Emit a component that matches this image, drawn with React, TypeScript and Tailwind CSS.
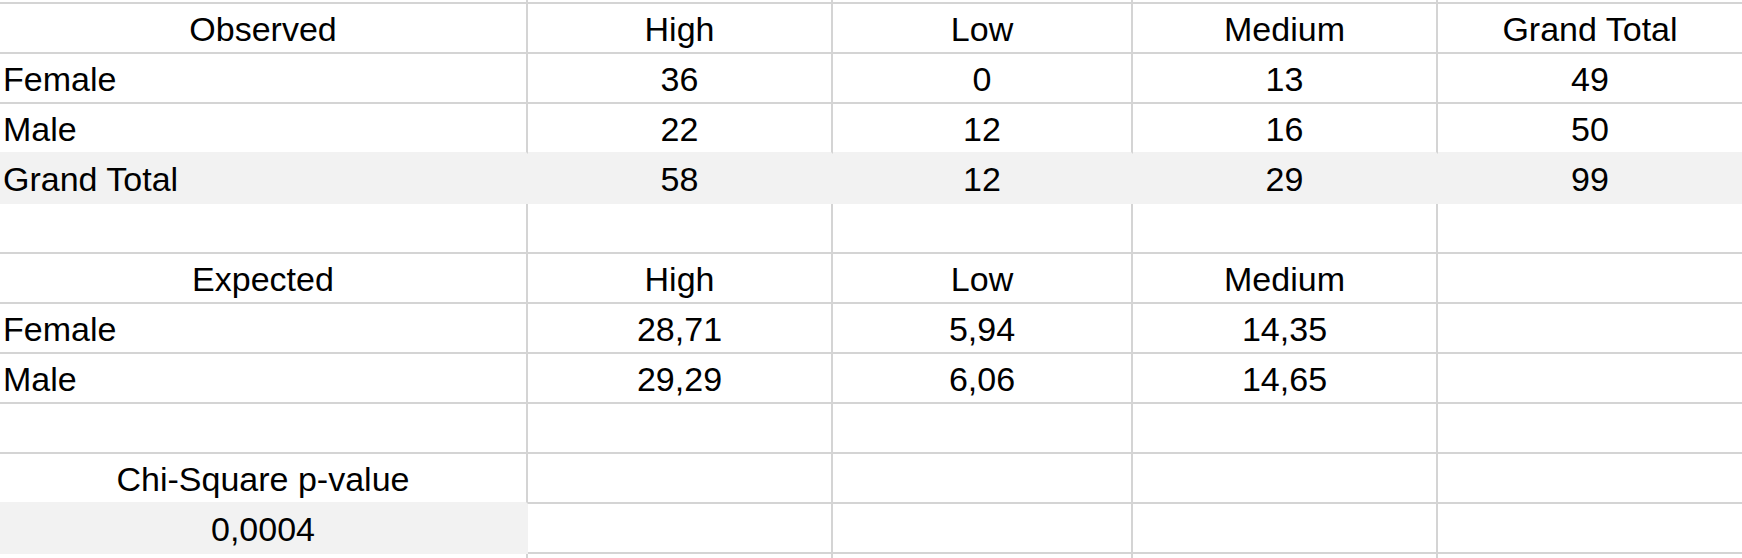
import clsx from 'clsx';

type Row = {
  cells: string[];
  fill?: 'all' | 'first';
  leftLabel?: boolean;
};

const rows: Row[] = [
  { cells: ['Observed', 'High', 'Low', 'Medium', 'Grand Total'] },
  { cells: ['Female', '36', '0', '13', '49'], leftLabel: true },
  { cells: ['Male', '22', '12', '16', '50'], leftLabel: true },
  { cells: ['Grand Total', '58', '12', '29', '99'], leftLabel: true, fill: 'all' },
  { cells: ['', '', '', '', ''] },
  { cells: ['Expected', 'High', 'Low', 'Medium', ''] },
  { cells: ['Female', '28,71', '5,94', '14,35', ''], leftLabel: true },
  { cells: ['Male', '29,29', '6,06', '14,65', ''], leftLabel: true },
  { cells: ['', '', '', '', ''] },
  { cells: ['Chi-Square p-value', '', '', '', ''] },
  { cells: ['0,0004', '', '', '', ''], fill: 'first' },
];

const isFilled = (row: Row | undefined, col: number) =>
  !!row && (row.fill === 'all' || (row.fill === 'first' && col === 0));

const Cell = ({
  text,
  col,
  filled,
  nextFilled,
  left,
}: {
  text: string;
  col: number;
  filled: boolean;
  nextFilled: boolean;
  left: boolean;
}) => {
  const last = col === 4;
  return (
    <div
      className={clsx(
        'h-[50px] border-b-2 pt-[4px] leading-[42px] whitespace-nowrap overflow-hidden',
        !last && 'border-r-2',
        filled ? 'bg-[#f2f2f2] border-r-[#f2f2f2]' : 'bg-white border-r-[#d4d4d4]',
        filled || nextFilled ? 'border-b-[#f2f2f2]' : 'border-b-[#d4d4d4]',
        left ? 'text-left pl-[3px]' : 'text-center'
      )}
    >
      {text}
    </div>
  );
};

const EdgeRow = ({ top }: { top: boolean }) => (
  <>
    {[0, 1, 2, 3, 4].map((c) => (
      <div
        key={c}
        className={clsx(
          'h-[4px] border-[#d4d4d4]',
          top && 'border-b-2',
          c !== 4 && 'border-r-2'
        )}
      />
    ))}
  </>
);

export default function App() {
  return (
    <div className="w-[1742px] h-[558px] overflow-hidden bg-white text-black text-[34px] font-['Liberation_Sans',Arial,sans-serif]">
      <div className="grid grid-cols-[528px_305px_300px_305px_1fr]">
        <EdgeRow top />
        {rows.map((row, r) =>
          row.cells.map((text, c) => (
            <Cell
              key={`${r}-${c}`}
              text={text}
              col={c}
              filled={isFilled(row, c)}
              nextFilled={isFilled(rows[r + 1], c)}
              left={!!row.leftLabel && c === 0}
            />
          ))
        )}
        <EdgeRow top={false} />
      </div>
    </div>
  );
}
